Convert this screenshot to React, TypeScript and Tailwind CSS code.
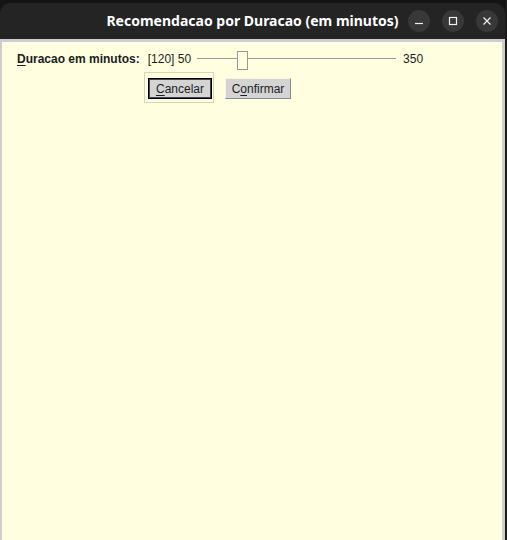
import React from "react";

export default function App() {
  const ui = { fontFamily: '"Liberation Sans", Arial, sans-serif' };
  return (
    <div className="w-[507px] h-[540px] bg-[#141414] overflow-hidden relative">
      <div className="mt-[3px] w-[505px] h-[537px] rounded-t-[10px] bg-[#242424] flex flex-col">
        {/* Title bar */}
        <div className="h-[36px] flex items-center justify-center relative shrink-0">
          <span
            className="text-white font-bold text-[14px] leading-none"
            style={{ fontFamily: '"Noto Sans", "DejaVu Sans", sans-serif' }}
          >
            Recomendacao por Duracao (em minutos)
          </span>
          <div className="absolute right-[7px] top-[7px] flex gap-[12px]">
            <div className="w-[22px] h-[22px] rounded-full bg-[#383838] flex items-center justify-center">
              <svg width="10" height="10" viewBox="0 0 10 10">
                <line x1="1" y1="7.5" x2="9" y2="7.5" stroke="#f0f0f0" strokeWidth="1.2" />
              </svg>
            </div>
            <div className="w-[22px] h-[22px] rounded-full bg-[#383838] flex items-center justify-center">
              <svg width="10" height="10" viewBox="0 0 10 10">
                <rect x="1.5" y="1.5" width="7" height="7" fill="none" stroke="#f0f0f0" strokeWidth="1.2" />
              </svg>
            </div>
            <div className="w-[22px] h-[22px] rounded-full bg-[#383838] flex items-center justify-center">
              <svg width="10" height="10" viewBox="0 0 10 10">
                <path d="M1.5 1.5 L8.5 8.5 M8.5 1.5 L1.5 8.5" stroke="#f0f0f0" strokeWidth="1.2" />
              </svg>
            </div>
          </div>
        </div>
        {/* Frame */}
        <div className="flex-1 bg-[#cdcdcd] pl-[2px] pr-[3px] pt-[3px] flex">
          <div className="flex-1 bg-[#ffffdf] text-[12px] text-[#1c1c24]" style={ui}>
            {/* Row 1 */}
            <div className="mt-[6px] h-[21px] flex items-center">
              <span className="ml-[15px] font-bold">
                <span className="underline underline-offset-2">D</span>uracao em minutos:
              </span>
              <span className="ml-[8px]">[120] 50</span>
              <div className="ml-[6px] w-[199px] h-[21px] relative">
                <div className="absolute left-0 right-0 top-[10px] h-[1px] bg-[#9a9a8a]" />
                <div className="absolute left-0 right-0 top-[11px] h-[1px] bg-white" />
                <div className="absolute left-[40px] top-[3px] w-[11px] h-[19px] border border-[#9a9a8a] bg-[#ffffdf] shadow-[inset_1px_1px_0_#ffffff]" />
              </div>
              <span className="ml-[7px]">350</span>
            </div>
            {/* Row 2 */}
            <div className="mt-[3px] flex items-start">
              <div className="ml-[142px] w-[70px] h-[31px] border border-[#d6d6bc] relative">
                <div className="absolute left-[3px] top-[5px] w-[64px] h-[21px] border border-black bg-[#d4d4d4] shadow-[inset_-1px_-1px_0_#444,inset_1px_1px_0_#444] flex items-center justify-center">
                  <span>
                    <span className="underline underline-offset-2">C</span>ancelar
                  </span>
                </div>
              </div>
              <div className="ml-[11px] mt-[6px] w-[66px] h-[21px] bg-[#d4d4d4] border border-t-[#f4f4f4] border-l-[#f4f4f4] border-b-[#8a8a8a] border-r-[#8a8a8a] flex items-center justify-center">
                <span>
                  C<span className="underline underline-offset-2">o</span>nfirmar
                </span>
              </div>
            </div>
          </div>
        </div>
      </div>
      <div className="absolute right-0 top-0 w-[2px] h-[540px] bg-[#1a1a1a]" />
    </div>
  );
}
